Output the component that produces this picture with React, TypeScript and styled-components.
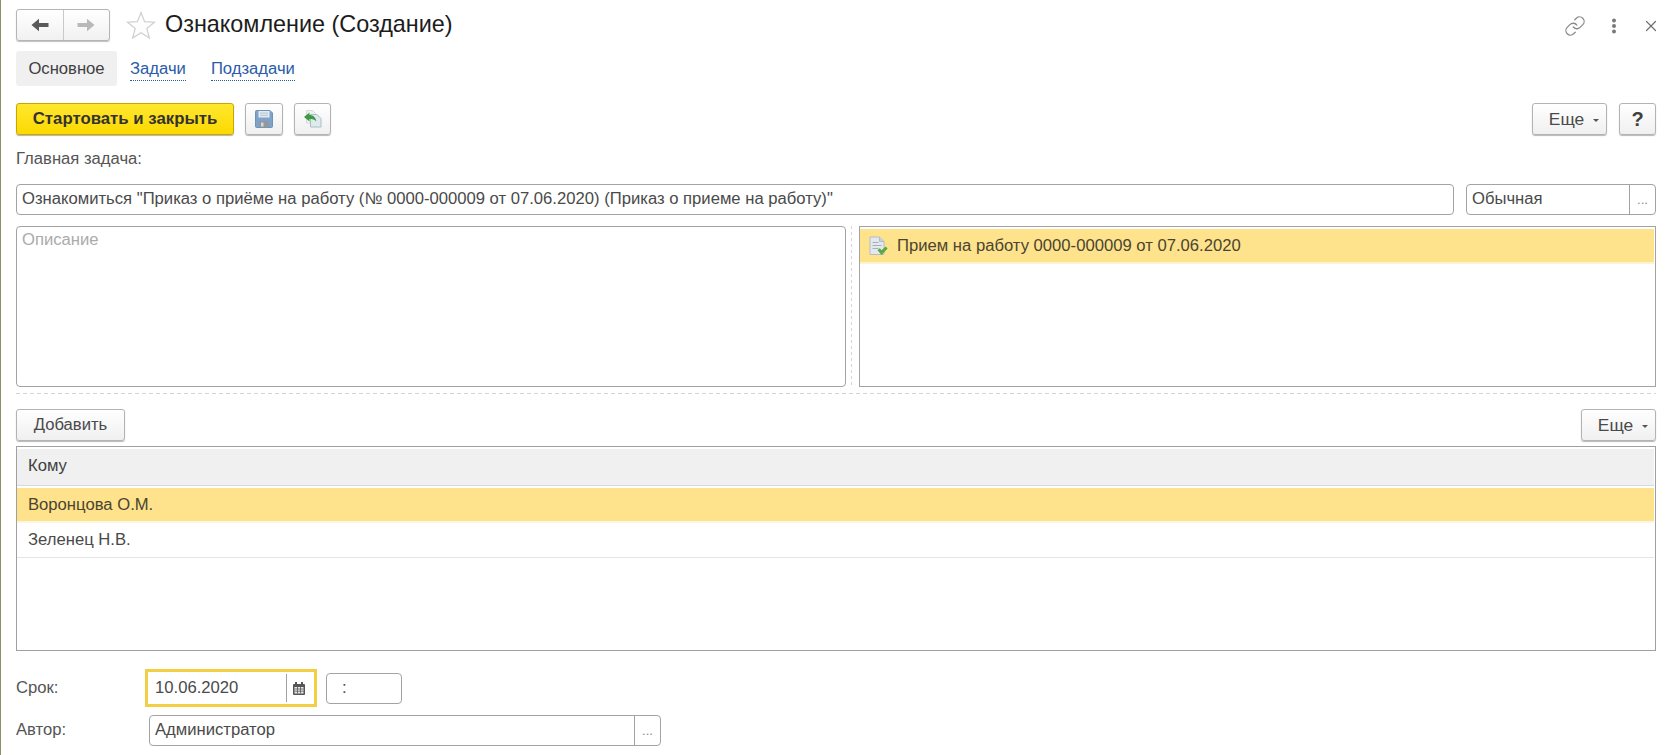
import styled, { createGlobalStyle } from "styled-components"
import { Link as LinkIcon, X } from "lucide-react"

const GlobalStyle = createGlobalStyle`
  html, body {
    margin: 0;
    padding: 0;
    background: #fff;
    overflow: hidden;
  }
  * {
    box-sizing: border-box;
  }
`

const ArrowIcon = ({ left, color }: { left?: boolean; color: string }) => (
  <svg width="18" height="14" viewBox="0 0 18 14" style={{ transform: left ? "none" : "scaleX(-1)" }}>
    <path d="M0.5 7 L8 0.8 V5 H17.5 V9 H8 V13.2 Z" fill={color} />
  </svg>
)

const StarIcon = () => (
  <svg width="30" height="28" viewBox="0 0 30 28">
    <path
      d="M15 1.5 L18.6 10.6 L28.5 11.2 L20.8 17.5 L23.4 27 L15 21.7 L6.6 27 L9.2 17.5 L1.5 11.2 L11.4 10.6 Z"
      fill="#fdfdfd"
      stroke="#cfcfcf"
      strokeWidth="1.2"
    />
  </svg>
)

const DotsIcon = () => (
  <svg width="6" height="16" viewBox="0 0 6 16">
    <circle cx="3" cy="2.5" r="2" fill="#7a7a7a" />
    <circle cx="3" cy="8" r="2" fill="#7a7a7a" />
    <circle cx="3" cy="13.5" r="2" fill="#7a7a7a" />
  </svg>
)

const SaveIcon = () => (
  <svg width="18" height="18" viewBox="0 0 18 18">
    <path d="M0.5 1.5 Q0.5 0.5 1.5 0.5 H15 L17.5 3 V16.5 Q17.5 17.5 16.5 17.5 H1.5 Q0.5 17.5 0.5 16.5 Z" fill="#7fa3c8" stroke="#6f93b8" />
    <rect x="3.5" y="1" width="11" height="6.5" fill="#e4eaf0" />
    <rect x="5" y="2.6" width="8" height="1" fill="#b3c3d3" />
    <rect x="5" y="4.8" width="8" height="1" fill="#b3c3d3" />
    <rect x="4.5" y="11" width="9" height="6.5" fill="#93989c" />
    <rect x="6" y="12.5" width="2.5" height="4" fill="#d5d8da" />
  </svg>
)

const ReturnDocIcon = () => (
  <svg width="19" height="18" viewBox="0 0 19 18">
    <path d="M3.5 0.5 H9.5 L12.5 3.5 V13 H3.5 Z" fill="#eef3f2" stroke="#d3dcdc" />
    <path d="M7.5 4.5 H14 L18 8.5 V17 H7.5 Z" fill="#dfeaec" stroke="#a9bfc4" />
    <path d="M1 7 L6.5 2.5 V5 C10 5 12.5 7 13.5 11.5 C11.5 9.5 9.5 9 6.5 9 V11.5 Z" fill="#3f9a45" />
  </svg>
)

const CheckedDocIcon = () => (
  <svg width="19" height="20" viewBox="0 0 19 20">
    <path d="M1 1 H10.5 L15 5.5 V18.5 H1 Z" fill="#e4e8ec" stroke="#b5bcc4" />
    <path d="M10.5 1 V5.5 H15" fill="#c9d0d6" stroke="#b5bcc4" />
    <rect x="3.5" y="6" width="6" height="1" fill="#9fb2c5" />
    <rect x="3.5" y="9" width="9" height="1" fill="#9fb2c5" />
    <rect x="3.5" y="12" width="6" height="1" fill="#9fb2c5" />
    <path d="M8.5 14.2 L10.8 12.2 L12.6 14.2 L16.6 10.4 L18.6 12.4 L12.6 19 Z" fill="#5aa93f" />
  </svg>
)

const CalendarIcon = () => (
  <svg width="12" height="13" viewBox="0 0 12 13">
    <path d="M1 2 H11 Q12 2 12 3 V12 Q12 13 11 13 H1 Q0 13 0 12 V3 Q0 2 1 2 Z" fill="#555" />
    <rect x="2" y="0" width="2" height="3" fill="#555" />
    <rect x="8" y="0" width="2" height="3" fill="#555" />
    <rect x="1.5" y="5" width="9" height="6.5" fill="#e8e8e8" />
    <path d="M1.5 7 H10.5 M1.5 9.2 H10.5 M4.5 5 V11.5 M7.5 5 V11.5" stroke="#555" strokeWidth="0.8" />
  </svg>
)

const App = () => {
  return (
    <Page>
      <GlobalStyle />
      <Header>
        <NavGroup>
          <NavButton>
            <ArrowIcon left color="#5a5a5a" />
          </NavButton>
          <NavButton>
            <ArrowIcon color="#b9b9b9" />
          </NavButton>
        </NavGroup>
        <StarBox>
          <StarIcon />
        </StarBox>
        <Title>Ознакомление (Создание)</Title>
        <WindowTools>
          <LinkIcon size={22} color="#8a8a8a" strokeWidth={1.4} />
          <DotsIcon />
          <X size={18} color="#6f6f6f" strokeWidth={1.6} />
        </WindowTools>
      </Header>

      <Tabs>
        <ActiveTab>Основное</ActiveTab>
        <TabLink>Задачи</TabLink>
        <TabLink>Подзадачи</TabLink>
      </Tabs>

      <Toolbar>
        <PrimaryButton>Стартовать и закрыть</PrimaryButton>
        <IconButton $width={38}>
          <SaveIcon />
        </IconButton>
        <IconButton $width={37}>
          <ReturnDocIcon />
        </IconButton>
        <Spacer />
        <MoreButton $width={75}>
          Еще
          <Caret />
        </MoreButton>
        <HelpButton>?</HelpButton>
      </Toolbar>

      <MainTaskLabel>Главная задача:</MainTaskLabel>

      <TaskRow>
        <Field $grow>
          <FieldText>Ознакомиться "Приказ о приёме на работу (№ 0000-000009 от 07.06.2020) (Приказ о приеме на работу)"</FieldText>
        </Field>
        <Field $width={190}>
          <FieldText>Обычная</FieldText>
          <PickButton>...</PickButton>
        </Field>
      </TaskRow>

      <Panels>
        <DescriptionBox>Описание</DescriptionBox>
        <PanelDivider />
        <AttachmentBox>
          <AttachmentRow>
            <CheckedDocIcon />
            Прием на работу 0000-000009 от 07.06.2020
          </AttachmentRow>
        </AttachmentBox>
      </Panels>
      <HorizontalDivider />

      <TableBar>
        <PlainButton $width={109}>Добавить</PlainButton>
        <MoreButton $width={75}>
          Еще
          <Caret />
        </MoreButton>
      </TableBar>

      <Table>
        <TableHead>Кому</TableHead>
        <TableRow $selected>Воронцова О.М.</TableRow>
        <TableRow>Зеленец Н.В.</TableRow>
      </Table>

      <DateRow>
        <FormLabel>Срок:</FormLabel>
        <DateField>
          <DateValue>10.06.2020</DateValue>
          <CalendarBox>
            <CalendarIcon />
          </CalendarBox>
        </DateField>
        <TimeField>:</TimeField>
      </DateRow>

      <AuthorRow>
        <AuthorLabel>Автор:</AuthorLabel>
        <Field $width={512}>
          <FieldText>Администратор</FieldText>
          <PickButton>...</PickButton>
        </Field>
      </AuthorRow>
    </Page>
  )
}

export default App

const Page = styled.div`
  width: 1679px;
  height: 755px;
  padding: 9px 23px 0 15px;
  border-left: 1px solid #8f8f68;
  font-family: "Liberation Sans", Arial, sans-serif;
  font-size: 16.65px;
  color: #4a4a4a;
  overflow: hidden;
`

const Header = styled.div`
  display: flex;
  align-items: center;
  height: 32px;
`

const NavGroup = styled.div`
  display: flex;
  width: 94px;
  height: 32px;
  border: 1px solid #b5b5b5;
  border-radius: 3px;
  background: linear-gradient(#ffffff, #f1f1f1);
  box-shadow: 0 1px 1px rgba(0, 0, 0, 0.25);
`

const NavButton = styled.div`
  flex: 1;
  display: flex;
  align-items: center;
  justify-content: center;

  & + & {
    border-left: 1px solid #c9c9c9;
  }
`

const StarBox = styled.div`
  display: flex;
  margin-left: 16px;
`

const Title = styled.h1`
  margin: 0 0 2px 9px;
  font-size: 23.4px;
  font-weight: 400;
  color: #1c1c1c;
`

const WindowTools = styled.div`
  display: flex;
  align-items: center;
  gap: 25px;
  margin-left: auto;
  margin-right: -4px;
  padding-top: 1px;
`

const Tabs = styled.div`
  display: flex;
  align-items: center;
  margin-top: 10px;
  height: 35px;
`

const ActiveTab = styled.div`
  display: flex;
  align-items: center;
  justify-content: center;
  width: 101px;
  height: 35px;
  border-radius: 3px;
  background: #f0f0f0;
  color: #404040;
`

const TabLink = styled.a`
  margin: 2px 12px 0 13px;
  padding-bottom: 1px;
  color: #2a5ca8;
  border-bottom: 1px dotted #2a5ca8;
`

const Toolbar = styled.div`
  display: flex;
  align-items: center;
  margin-top: 17px;
  height: 32px;
`

const Spacer = styled.div`
  flex: 1;
`

const BaseButton = styled.div<{ $width?: number }>`
  display: flex;
  align-items: center;
  justify-content: center;
  flex: none;
  width: ${(p) => (p.$width ? `${p.$width}px` : "auto")};
  height: 32px;
  border: 1px solid #b3b3b3;
  border-radius: 3px;
  background: linear-gradient(#ffffff, #f0f0f0);
  box-shadow: 0 1px 1px rgba(0, 0, 0, 0.28);
  color: #4a4a4a;
`

const PrimaryButton = styled.div`
  display: flex;
  align-items: center;
  justify-content: center;
  width: 218px;
  height: 32px;
  border: 1px solid #c9a700;
  border-radius: 3px;
  background: linear-gradient(#ffe72e, #fcd900);
  box-shadow: 0 1px 1px rgba(0, 0, 0, 0.3);
  font-size: 16.8px;
  font-weight: 700;
  color: #333;
`

const IconButton = styled(BaseButton)`
  margin-left: 11px;
`

const PlainButton = styled(BaseButton)``

const MoreButton = styled(BaseButton)`
  gap: 9px;
  padding-left: 9px;
  font-size: 17.4px;
`

const HelpButton = styled(BaseButton)`
  width: 37px;
  margin-left: 12px;
  font-weight: 700;
  font-size: 20px;
  color: #404040;
`

const Caret = styled.span`
  width: 0;
  height: 0;
  margin-top: 3px;
  border-left: 3px solid transparent;
  border-right: 3px solid transparent;
  border-top: 3px solid #555;
`

const MainTaskLabel = styled.div`
  margin-top: 15px;
  height: 18px;
  line-height: 18px;
  color: #555;
`

const TaskRow = styled.div`
  display: flex;
  gap: 12px;
  margin-top: 16px;
`

const Field = styled.div<{ $grow?: boolean; $width?: number }>`
  display: flex;
  align-items: stretch;
  flex: ${(p) => (p.$grow ? "1" : "none")};
  width: ${(p) => (p.$width ? `${p.$width}px` : "auto")};
  height: 31px;
  border: 1px solid #a3a3a3;
  border-radius: 4px;
  background: #fff;
`

const FieldText = styled.div`
  flex: 1;
  padding-left: 5px;
  line-height: 28px;
  white-space: nowrap;
  overflow: hidden;
`

const PickButton = styled.div`
  width: 26px;
  border-left: 1px solid #a3a3a3;
  text-align: center;
  font-size: 13px;
  line-height: 30px;
  color: #8a8a8a;
`

const Panels = styled.div`
  display: flex;
  align-items: stretch;
  margin-top: 11px;
  height: 161px;
`

const DescriptionBox = styled.div`
  width: 830px;
  padding: 3px 5px;
  border: 1px solid #a3a3a3;
  border-radius: 4px;
  color: #ababab;
`

const PanelDivider = styled.div`
  width: 13px;
  background: repeating-linear-gradient(#d4d4d4 0 3px, transparent 3px 6px) 5px 0 / 1px 100% no-repeat;
`

const AttachmentBox = styled.div`
  flex: 1;
  padding: 2px 1px 2px 0;
  border: 1px solid #a3a3a3;
`

const AttachmentRow = styled.div`
  display: flex;
  align-items: center;
  gap: 9px;
  height: 35px;
  padding-left: 9px;
  border-bottom: 2px solid #fdf3d0;
  background: #fee28c;
  color: #4a4530;
`

const HorizontalDivider = styled.div`
  height: 1px;
  margin-top: 6px;
  background: repeating-linear-gradient(90deg, #d4d4d4 0 4px, transparent 4px 7px);
`

const TableBar = styled.div`
  display: flex;
  justify-content: space-between;
  margin-top: 15px;
`

const Table = styled.div`
  height: 205px;
  margin-top: 5px;
  padding: 2px 1px 1px 0;
  border: 1px solid #a0a0a0;
`

const TableHead = styled.div`
  display: flex;
  align-items: center;
  height: 37px;
  padding: 0 0 3px 11px;
  border-bottom: 1px solid #d9d9d9;
  background: #f0f0f0;
  color: #404040;
`

const TableRow = styled.div<{ $selected?: boolean }>`
  display: flex;
  align-items: center;
  height: 35px;
  margin-top: ${(p) => (p.$selected ? "2px" : "0")};
  padding-left: 11px;
  border-bottom: ${(p) => (p.$selected ? "2px solid #fdf6df" : "1px solid #e4e4e4")};
  background: ${(p) => (p.$selected ? "#fee28c" : "#fff")};
  color: ${(p) => (p.$selected ? "#4a4530" : "#4a4a4a")};
`

const DateRow = styled.div`
  display: flex;
  align-items: center;
  margin-top: 18px;
  height: 38px;
`

const FormLabel = styled.div`
  width: 129px;
  color: #555;
`

const DateField = styled.div`
  display: flex;
  align-items: center;
  width: 172px;
  height: 38px;
  border: 3px solid #f2cf44;
`

const DateValue = styled.div`
  flex: 1;
  padding-left: 7px;
`

const CalendarBox = styled.div`
  display: flex;
  align-items: center;
  justify-content: center;
  width: 28px;
  height: 28px;
  padding-right: 3px;
  border-left: 1px solid #a3a3a3;
`

const TimeField = styled.div`
  width: 76px;
  height: 31px;
  margin-left: 9px;
  padding-left: 15px;
  border: 1px solid #a3a3a3;
  border-radius: 4px;
  line-height: 28px;
`

const AuthorRow = styled.div`
  display: flex;
  align-items: center;
  margin-top: 8px;
`

const AuthorLabel = styled(FormLabel)`
  width: 133px;
  margin-top: -2px;
`
